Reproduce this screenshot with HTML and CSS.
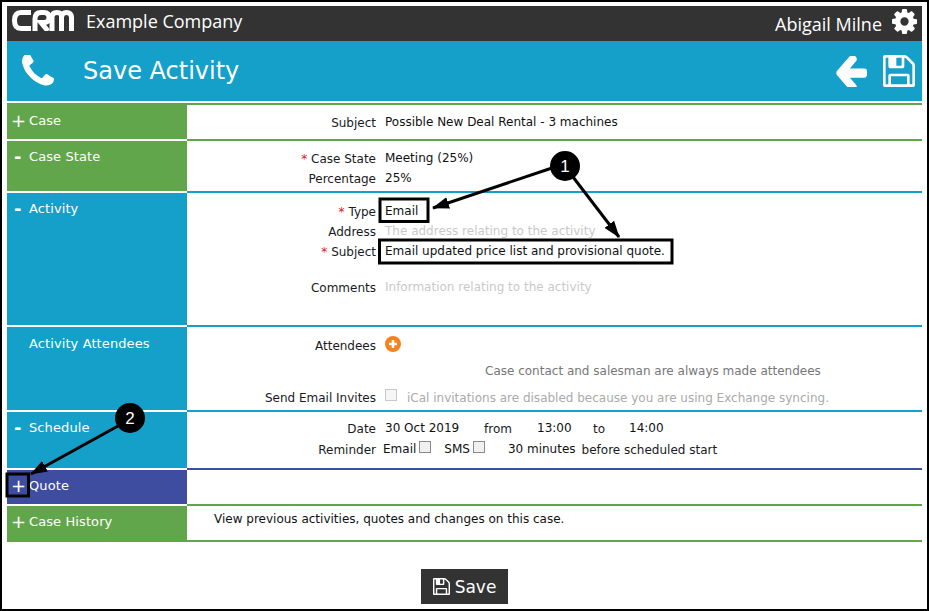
FILE: index.html
```html
<!DOCTYPE html>
<html lang="en">
<head>
<meta charset="utf-8">
<title>Save Activity</title>
<link rel="stylesheet" href="styles.css">
</head>
<body>
<div class="frame">
  <header class="topbar">
    <div class="brand">
      <svg class="logo" viewBox="0 0 62 21" aria-hidden="true">
        <path class="logo-stroke" d="M19 2.500H9Q2.500 2.500 2.500 10.500T9 18.500H19"/>
        <path class="logo-stroke" d="M23 21V9Q23 2.500 29 2.500H32Q37 2.500 37 7.500T32 12.500H29L36 21"/>
        <path class="logo-stroke" d="M40 21V7Q40 2.500 45 2.500T49.500 7V21M49.500 7Q50 2.500 54.500 2.500T59.500 7V21"/>
      </svg>
      <span class="company">Example Company</span>
    </div>
    <div class="user">
      <span class="username">Abigail Milne</span>
      <svg class="gear" viewBox="128 128 1536 1536" aria-hidden="true"><path d="M1152 896q0-106-75-181t-181-75-181 75-75 181 75 181 181 75 181-75 75-181zm512-109v222q0 12-8 23t-20 13l-185 28q-19 54-39 91 35 50 107 138 10 12 10 25t-9 23q-27 37-99 108t-94 71q-12 0-26-9l-138-108q-44 23-91 38-16 136-29 186-7 28-36 28h-222q-14 0-24.500-8.500t-11.500-21.500l-28-184q-49-16-90-37l-141 107q-10 9-25 9-14 0-25-11-126-114-165-168-7-10-7-23 0-12 8-23 15-21 51-66.500t54-70.500q-27-50-41-99l-183-27q-13-2-21-12.500t-8-23.500v-222q0-12 8-23t19-13l186-28q14-46 39-92-40-57-107-138-10-12-10-24 0-10 9-23 26-36 98.500-107.500t94.500-71.500q13 0 26 10l138 107q44-23 91-38 16-136 29-186 7-28 36-28h222q14 0 24.500 8.500t11.500 21.500l28 184q49 16 90 37l142-107q9-9 24-9 13 0 25 10 129 119 165 170 7 8 7 22 0 12-8 23-15 21-51 66.500t-54 70.500q26 50 41 98l183 28q13 2 21 12.500t8 23.500z"/></svg>
    </div>
  </header>

  <div class="titlebar">
    <svg class="phone" viewBox="192 192 1408 1408" aria-hidden="true"><path d="M1600 1240q0 27-10 70.500t-21 68.500q-21 50-122 106-94 51-186 51-27 0-53-3.500t-57.500-12.500-47-14.500-55.500-20.500-49-18q-98-35-175-83-127-79-264-216t-216-264q-48-77-83-175-3-9-18-49t-20.500-55.500-14.500-47-12.500-57.500-3.500-53q0-92 51-186 56-101 106-122 25-11 68.500-21t70.500-10q14 0 21 3 18 6 53 76 11 19 30 54t35 63.500 31 53.500q3 4 17.500 25t21.500 35.500 7 28.500q0 20-28.500 50t-62 55-62 53-28.500 46q0 9 5 22.500t8.500 20.500 14 24 11.500 19q76 137 174 235t235 174q2 1 19 11.500t24 14 20.500 8.500 22.500 5q18 0 46-28.500t53-62 55-62 50-28.500q14 0 28.500 7t35.500 21.500 25 17.500q25 15 53.500 31t63.500 35 54 30q70 35 76 53 3 7 3 21z"/></svg>
    <h1 class="title">Save Activity</h1>
    <svg class="back" viewBox="128 254 1536 1284" preserveAspectRatio="none" aria-hidden="true"><path d="M1664 896v128q0 53-32.500 90.500t-84.500 37.500h-704l293 294q38 36 38 90t-38 90l-75 76q-37 37-90 37-52 0-91-37l-651-652q-37-37-37-90 0-52 37-91l651-650q38-38 91-38 52 0 90 38l75 74q38 38 38 91t-38 91l-293 293h704q52 0 84.500 37.500t32.500 90.500z"/></svg>
    <svg class="floppy" viewBox="128 128 1536 1536" aria-hidden="true"><path d="M512 1536h768v-384h-768v384zm896 0h128v-896q0-14-10-38.500t-20-34.500l-281-281q-10-10-34-20t-39-10v416q0 40-28 68t-68 28h-576q-40 0-68-28t-28-68v-416h-128v1280h128v-416q0-40 28-68t68-28h832q40 0 68 28t28 68v416zm-384-928v-320q0-13-9.500-22.500t-22.500-9.500h-192q-13 0-22.500 9.500t-9.500 22.500v320q0 13 9.500 22.500t22.500 9.500h192q13 0 22.500-9.500t9.500-22.500zm640 32v928q0 40-28 68t-68 28h-1344q-40 0-68-28t-28-68v-1344q0-40 28-68t68-28h928q40 0 88 20t76 48l280 280q28 28 48 76t20 88z"/></svg>
  </div>

  <main class="sections">
    <section class="section green first">
      <div class="side"><span class="toggle plus">+</span>Case</div>
      <div class="body pad-case">
        <div class="row"><span class="label">Subject</span><span class="value">Possible New Deal Rental - 3 machines</span></div>
      </div>
    </section>

    <section class="section green">
      <div class="side"><span class="toggle minus">-</span>Case State</div>
      <div class="body pad-state">
        <div class="row"><span class="label"><i class="req">*</i> Case State</span><span class="value">Meeting (25%)</span></div>
        <div class="row"><span class="label">Percentage</span><span class="value">25%</span></div>
      </div>
    </section>

    <section class="section blue">
      <div class="side"><span class="toggle minus">-</span>Activity</div>
      <div class="body pad-activity">
        <div class="row"><span class="label"><i class="req">*</i> Type</span><span class="value">Email</span></div>
        <div class="row"><span class="label">Address</span><span class="value hint">The address relating to the activity</span></div>
        <div class="row"><span class="label"><i class="req">*</i> Subject</span><span class="value">Email updated price list and provisional quote.</span></div>
        <div class="row gap-comments"><span class="label">Comments</span><span class="value hint">Information relating to the activity</span></div>
      </div>
    </section>

    <section class="section blue">
      <div class="side side-low"><span class="toggle"></span>Activity Attendees</div>
      <div class="body pad-attendees">
        <div class="row">
          <span class="label">Attendees</span>
          <svg class="add" viewBox="0 0 16 16" aria-hidden="true"><circle cx="8" cy="8" r="8"/><path d="M8 4v8M4 8h8"/></svg>
        </div>
        <div class="row gap-note"><span class="note">Case contact and salesman are always made attendees</span></div>
        <div class="row gap-invite"><span class="label">Send Email Invites</span><span class="check disabled"></span><span class="ical">iCal invitations are disabled because you are using Exchange syncing.</span></div>
      </div>
    </section>

    <section class="section blue">
      <div class="side"><span class="toggle minus">-</span>Schedule</div>
      <div class="body pad-schedule">
        <div class="row">
          <span class="label">Date</span>
          <span class="value w-date">30 Oct 2019</span>
          <span class="w-from">from</span>
          <span class="value w-start">13:00</span>
          <span class="w-to">to</span>
          <span class="value">14:00</span>
        </div>
        <div class="row gap-reminder">
          <span class="label">Reminder</span>
          <span class="value opt-email">Email</span><span class="check"></span>
          <span class="value opt-sms">SMS</span><span class="check"></span>
          <span class="value opt-mins">30 minutes</span>
          <span>before scheduled start</span>
        </div>
      </div>
    </section>

    <section class="section purple">
      <div class="side"><span class="toggle plus">+</span>Quote</div>
      <div class="body pad-quote"></div>
    </section>

    <section class="section green last">
      <div class="side"><span class="toggle plus">+</span>Case History</div>
      <div class="body pad-history">
        <div class="row"><span class="history-text value">View previous activities, quotes and changes on this case.</span></div>
      </div>
    </section>
  </main>

  <footer class="actions">
    <button class="save" type="button">
      <svg class="save-icon" viewBox="128 128 1536 1536" aria-hidden="true"><path d="M512 1536h768v-384h-768v384zm896 0h128v-896q0-14-10-38.500t-20-34.500l-281-281q-10-10-34-20t-39-10v416q0 40-28 68t-68 28h-576q-40 0-68-28t-28-68v-416h-128v1280h128v-416q0-40 28-68t68-28h832q40 0 68 28t28 68v416zm-384-928v-320q0-13-9.500-22.500t-22.500-9.500h-192q-13 0-22.500 9.500t-9.500 22.500v320q0 13 9.500 22.500t22.500 9.500h192q13 0 22.500-9.500t9.500-22.500zm640 32v928q0 40-28 68t-68 28h-1344q-40 0-68-28t-28-68v-1344q0-40 28-68t68-28h928q40 0 88 20t76 48l280 280q28 28 48 76t20 88z"/></svg>
      Save
    </button>
  </footer>

  <svg class="notes" viewBox="0 0 929 611" aria-hidden="true">
    <defs>
      <marker id="head" markerWidth="17" markerHeight="12" refX="16" refY="6" orient="auto" markerUnits="userSpaceOnUse"><path d="M0 0L17 6L0 12z"/></marker>
    </defs>
    <rect class="note-box" x="380" y="199" width="48" height="22.500"/>
    <rect class="note-box" x="379.500" y="240" width="292.500" height="23"/>
    <rect class="note-box" x="7" y="474" width="21.500" height="22"/>
    <path class="note-line" marker-end="url(#head)" d="M552 168L433 208"/>
    <path class="note-line" marker-end="url(#head)" d="M573 177L619 237"/>
    <path class="note-line" marker-end="url(#head)" d="M118 426L31 474"/>
    <circle cx="565" cy="166" r="15"/>
    <circle cx="130" cy="418" r="15"/>
    <text x="565" y="172" class="note-num">1</text>
    <text x="130" y="424" class="note-num">2</text>
  </svg>
</div>
</body>
</html>
```

FILE: styles.css
```css
* { box-sizing: border-box; }
html, body { margin: 0; padding: 0; background: #fff; }
body { font-family: "DejaVu Sans", Verdana, sans-serif; font-size: 12px; color: #1a1a22; }

.frame {
  position: relative;
  width: 929px;
  height: 611px;
  border: 2px solid #000;
  padding: 4px 5px 0;
  overflow: hidden;
}

/* top bars */
.topbar {
  height: 35px;
  background: #333;
  color: #fff;
  display: flex;
  align-items: flex-start;
  justify-content: space-between;
  padding: 0 5px;
}
.brand { display: flex; align-items: flex-start; }
.logo { width: 62px; height: 21px; margin: 4px 12px 0 0; }
.logo-stroke { fill: none; stroke: #fff; stroke-width: 5; }
.company, .username { font-family: "Open Sans", sans-serif; font-size: 18px; line-height: 24px; }
.company { margin-top: 3px; }
.user { display: flex; align-items: flex-start; }
.username { margin: 6px 10px 0 0; }
.gear { width: 25px; height: 25px; fill: #fff; margin-top: 3px; }

.titlebar {
  height: 60px;
  background: #14a0c9;
  display: flex;
  align-items: center;
  padding: 0 7px 0 15px;
}
.phone { width: 32px; height: 32px; fill: #fff; }
.title {
  margin: 0 0 0 29px;
  flex: 1;
  font-size: 24px;
  font-weight: normal;
  color: #fff;
}
.back { width: 32px; height: 31px; fill: #fff; margin-right: 16px; }
.floppy { width: 32px; height: 32px; fill: #fff; }

/* sections */
.sections { margin-top: 2px; }
.section { display: flex; }
.side {
  width: 180px;
  flex: none;
  margin-top: 2px;
  padding: 8px 0 0 5px;
  color: #fff;
  font-size: 13px;
  line-height: 16px;
  letter-spacing: .1px;
  display: flow-root;
}
.first .side { margin-top: 0; padding-top: 10px; }
.side-low { padding-top: 9px; }
.toggle {
  display: inline-block;
  width: 17px;
  margin-left: -1px;
  margin-right: 1px;
  font-size: 18px;
  line-height: 15px;
  vertical-align: top;
}
.minus { font-weight: bold; padding-left: 3px; }
.body { flex: 1; border-top: 2px solid; }
.green .side { background: #62a64b; }
.green .body { border-color: #62a64b; }
.blue .side { background: #14a0c9; }
.blue .body { border-color: #14a0c9; }
.purple .side { background: #3f4da0; }
.purple .body { border-color: #3f4da0; }
.last .body { border-bottom: 2px solid #62a64b; }

.pad-case { padding: 8px 0 6px; }
.pad-state { padding: 8px 0 2px; }
.pad-activity { padding: 9px 0 27px; }
.pad-attendees { padding: 9px 0 2px; }
.pad-schedule { padding: 7px 0 8px; }
.pad-quote { height: 36px; }
.pad-history { padding: 4px 0 10px; }

/* rows */
.row { display: flex; align-items: center; height: 20px; }
.label { width: 189px; flex: none; text-align: right; margin-right: 9px; white-space: nowrap; }
.value { color: #111; position: relative; top: -1px; white-space: nowrap; }
.req { color: #e8112d; font-style: normal; }
.hint { color: #c9c9c9; }
.gap-comments { margin-top: 16px; }
.gap-note { margin-top: 5px; }
.gap-invite { margin-top: 7px; }
.gap-reminder { margin-top: 1px; }
.note { margin-left: 298px; color: #777; }
.ical { margin-left: 10px; color: #aaa; }
.add { width: 16px; height: 16px; margin-top: -4px; }
.add circle { fill: #f58220; }
.add path { stroke: #fff; stroke-width: 2.500; fill: none; }

.check {
  width: 12px;
  height: 12px;
  flex: none;
  background: #f0f0f0;
  border: 1px solid #8a8a8a;
  position: relative;
  top: -3px;
}
.check.disabled { border-color: #c8c8c8; background: #f6f6f6; }

.w-date { width: 99px; }
.w-from { width: 53px; }
.w-start { width: 56px; }
.w-to { width: 36px; }
.opt-email { margin-left: -2px; margin-right: 3px; }
.opt-sms { margin-left: 13px; margin-right: 3px; }
.opt-mins { margin-left: 23px; margin-right: 6px; }
.history-text { margin-left: 27px; }

/* footer */
.actions { display: flex; justify-content: center; margin-top: 27px; }
.save {
  width: 87px;
  height: 35px;
  border: 0;
  padding: 0;
  background: #333;
  color: #fff;
  font-family: "DejaVu Sans", sans-serif;
  font-size: 17px;
  display: flex;
  align-items: center;
  justify-content: center;
  gap: 5px;
}
.save-icon { width: 17px; height: 17px; fill: #fff; }

/* call-outs drawn over the page */
.notes {
  position: absolute;
  left: -2px;
  top: -2px;
  width: 929px;
  height: 611px;
  pointer-events: none;
}
.note-box { fill: none; stroke: #000; stroke-width: 3; }
.note-line { stroke: #000; stroke-width: 3; fill: none; }
.note-num { fill: #fff; font-family: "Liberation Sans", sans-serif; font-size: 17px; text-anchor: middle; }
```
